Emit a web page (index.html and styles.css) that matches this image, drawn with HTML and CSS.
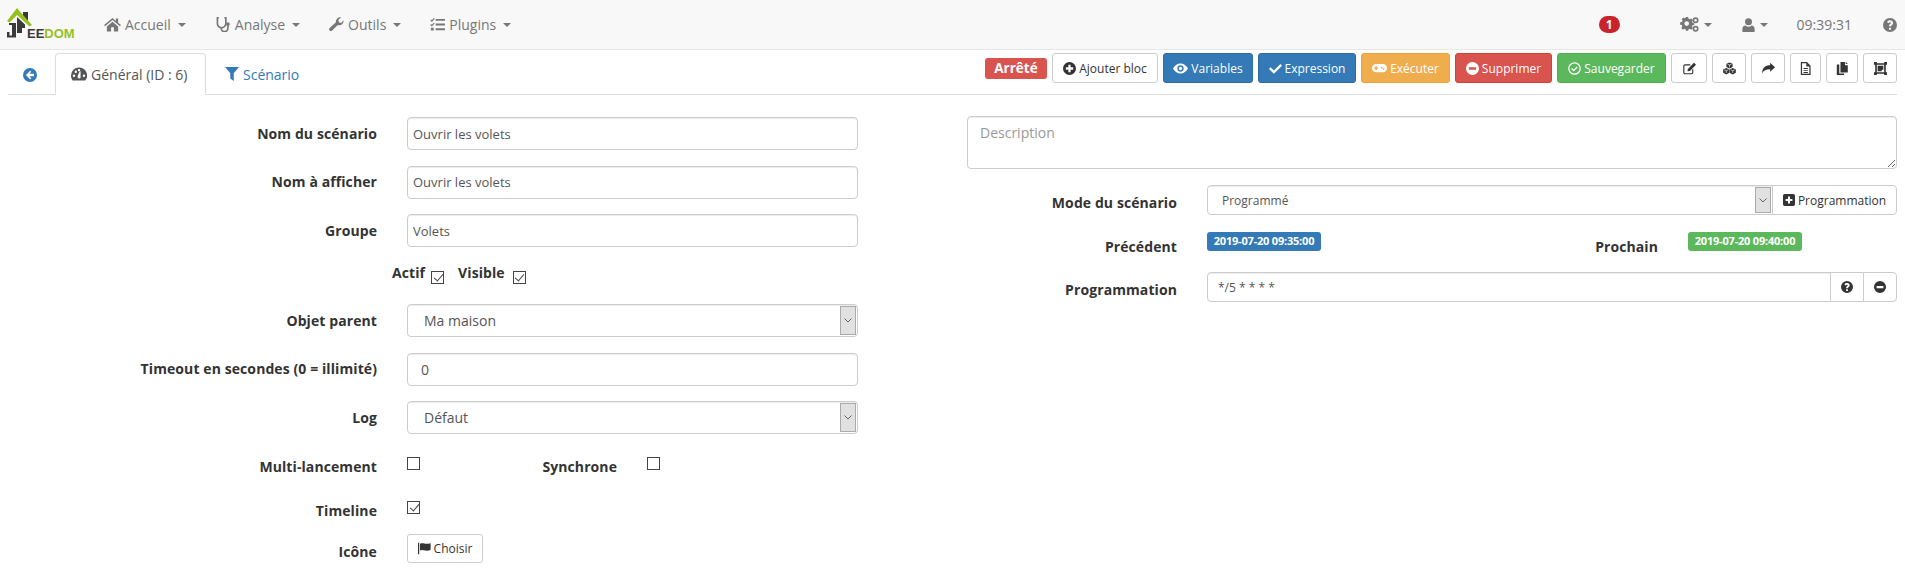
FILE: index.html
```html
<!DOCTYPE html>
<html lang="fr">
<head>
    <title>Jeedom - Scénario</title>
    <meta charset="UTF-8">
    <link rel="stylesheet" href="styles.css">
</head>
<body>
    <svg class="icon-defs" width="0" height="0">
        <symbol id="i-home" viewBox="0 0 18 16"><path d="M9 1 0 8.600l1 1.200L9 3.200l8 6.600 1-1.200-3-2.500V1.500h-2.400v2.700zM3 10v5.500h4.500V11h3v4.500H15V10L9 5z"/></symbol>
        <symbol id="i-steth" viewBox="0 0 16 16"><path d="M3 1H1.500v6a5 5 0 0 0 4 4.500v.5a3.600 3.600 0 0 0 7.200 0V9" fill="none" stroke="currentColor" stroke-width="1.800"/><path d="M9 1h1.500v6a5 5 0 0 1-5 4.500" fill="none" stroke="currentColor" stroke-width="1.800"/><circle cx="12.700" cy="7.500" r="2"/></symbol>
        <symbol id="i-wrench" viewBox="0 0 16 16"><path d="M15.500 4.200c0 2.500-2 4.500-4.500 4.500-.6 0-1.100-.1-1.600-.3l-6 6a1.900 1.900 0 0 1-2.700-2.700l6.700-6A4.500 4.500 0 0 1 13 .5L10 3l.5 2.500 2.500.8 2.400-2.900z"/></symbol>
        <symbol id="i-tasks" viewBox="0 0 16 16"><path d="M6 2h10v2H6zM6 7h10v2H6zM6 12h10v2H6zM1 11.500h3v3H1z"/><path d="m.7 3 1.300 1.300L4.500 1.500M.7 8l1.300 1.300L4.500 6.500" fill="none" stroke="currentColor" stroke-width="1.300"/></symbol>
        <symbol id="i-gauge" viewBox="0 1 16 14"><path d="M8 1.500a8 8 0 0 0-8 8c0 2 .7 3.600 1.700 5h12.600A8 8 0 0 0 8 1.500zM3 11a1.200 1.200 0 1 1 0-2.400A1.200 1.200 0 0 1 3 11zm1.800-4a1.200 1.200 0 1 1 0-2.400 1.200 1.200 0 0 1 0 2.400zM8 5.300a1.200 1.200 0 1 1 0-2.400 1.200 1.200 0 0 1 0 2.400zm1.500 6.700a1.800 1.800 0 0 1-3-1.500l2.200-5.300h.9zM13 11a1.200 1.200 0 1 1 0-2.400 1.200 1.200 0 0 1 0 2.400z"/></symbol>
        <symbol id="i-filter" viewBox="0 0 16 16"><path d="M0 0h16L10 7v9L6 13V7z"/></symbol>
        <symbol id="i-back" viewBox="0 0 16 16"><path fill-rule="evenodd" d="M8 0a8 8 0 1 0 0 16A8 8 0 0 0 8 0zm.3 3 1.200 1.200L7.300 6.500H12.500v3H7.300l2.200 2.300L8.300 13l-5-5z"/></symbol>
        <symbol id="i-plus-c" viewBox="0 0 16 16"><path fill-rule="evenodd" d="M8 0a8 8 0 1 0 0 16A8 8 0 0 0 8 0zm-1.400 3.500h2.800v3.100h3.100v2.800H9.400v3.100H6.600V9.400H3.500V6.600h3.100z"/></symbol>
        <symbol id="i-minus-c" viewBox="0 0 16 16"><path fill-rule="evenodd" d="M8 0a8 8 0 1 0 0 16A8 8 0 0 0 8 0zM3.500 6.500h9v3h-9z"/></symbol>
        <symbol id="i-eye" viewBox="0 0 18 12"><path fill-rule="evenodd" d="M9 0C5 0 2 2.500 0 6c2 3.500 5 6 9 6s7-2.500 9-6c-2-3.500-5-6-9-6zm0 2.200a3.800 3.800 0 1 1 0 7.600 3.800 3.800 0 0 1 0-7.600zM9 4a2 2 0 1 0 0 4 2 2 0 0 0 0-4z"/></symbol>
        <symbol id="i-check" viewBox="0 0 16 13"><path d="M2 5 0 7l6 6L16 3l-2-2-8 8z"/></symbol>
        <symbol id="i-game" viewBox="0 0 20 12"><path fill-rule="evenodd" d="M5.500 0h9a5.500 5.500 0 0 1 0 11h-9a5.500 5.500 0 0 1 0-11zM4.500 3v1.500H3v2h1.500V8h2V6.500H8v-2H6.500V3zM13 3.500a1.300 1.300 0 1 0 0 2.600 1.300 1.300 0 0 0 0-2.600zm2.500 2a1.300 1.300 0 1 0 0 2.600 1.300 1.300 0 0 0 0-2.600z"/></symbol>
        <symbol id="i-check-o" viewBox="0 0 16 16"><circle cx="8" cy="8" r="7" fill="none" stroke="currentColor" stroke-width="1.500"/><path d="m4.500 8 2.500 2.500 4.500-4.500" fill="none" stroke="currentColor" stroke-width="1.600"/></symbol>
        <symbol id="i-edit" viewBox="0 0 16 16"><path d="M12 9v4a1.500 1.500 0 0 1-1.500 1.500h-8A1.500 1.500 0 0 1 1 13V5a1.500 1.500 0 0 1 1.500-1.500H9" fill="none" stroke="currentColor" stroke-width="1.400"/><path d="M13.500.8 16 3.300 8.500 11l-3 .5.500-3z"/></symbol>
        <symbol id="i-cubes" viewBox="0 0 16 16"><path d="m8 .5 3.800 1.600v4.200L8 8 4.200 6.300V2.100zM4 7.500l3.800 1.600v4.200L4 15.500.2 13.300V9.100zM12 7.500l3.800 1.600v4.200L12 15.500l-3.800-2.200V9.100z"/><path d="M5.500 2.600 8 3.700l2.500-1.100M8 3.700v2.800M1.500 9.600 4 10.700l2.500-1.100M4 10.700v2.800M9.500 9.600l2.500 1.100 2.500-1.100M12 10.700v2.800" fill="none" stroke="#fff" stroke-width=".8"/></symbol>
        <symbol id="i-share" viewBox="0 0 16 14"><path d="M16 5.500 10 0v3C4 3 .5 6 0 13c1.800-3.500 5-5 10-5v3z"/></symbol>
        <symbol id="i-file" viewBox="0 0 14 16"><path d="M2 .8h6.500L12.500 5v10.200H2z" fill="none" stroke="currentColor" stroke-width="1.500"/><path d="M4.500 7.500h5.500v1.200H4.500zM4.500 10h5.500v1.200H4.500zM4.500 12.300h5.500v1.200H4.500zM8 1v4.500h4.500"/></symbol>
        <symbol id="i-copy" viewBox="0 0 16 16"><path d="M5.500 0H11v4h3.500v9h-9zM12 0l2.500 2.500H12zM1 3h3v11h6v2H1z"/></symbol>
        <symbol id="i-group" viewBox="0 0 16 16"><path fill-rule="evenodd" d="M0 0h3.500v1.500h9V0H16v3.500h-1.500v9H16V16h-3.500v-1.500h-9V16H0v-3.500h1.500v-9H0zm3.500 3.500v9h9v-9z"/><path d="M4.500 4.500h7v5h-2v2h-5z"/></symbol>
        <symbol id="i-flag" viewBox="0 0 16 14"><path d="M0 0h1.500v14H0zM2.500 1c4-1.500 6 1 10 0l3-.5v8c-3 2-6 1-9 .5-2-.3-3 0-4 .5z"/></symbol>
        <symbol id="i-question" viewBox="0 0 16 16"><path fill-rule="evenodd" d="M8 0a8 8 0 1 0 0 16A8 8 0 0 0 8 0zM6.800 11h2.400v2.300H6.800zM8 2.700c2 0 3.500 1.200 3.500 3 0 1.400-.8 2-1.500 2.500-.6.400-.8.700-.8 1.300H6.800c0-1.300.4-2 1.200-2.500.6-.4 1-.7 1-1.200s-.5-.9-1.100-.9-1.200.4-1.500 1L4.600 4.600C5.300 3.400 6.500 2.700 8 2.700z"/></symbol>
        <symbol id="i-gears" viewBox="0 0 20 16"><path fill-rule="evenodd" d="M6 2.500h2.500l.4 1.700 1.500.7 1.500-.9 1.700 1.800-.9 1.400.6 1.500 1.700.5V11l-1.700.4-.6 1.500.9 1.500-1.700 1.600-1.500-.9-1.500.6-.4 1.500H6v-1.500l-1.500-.6-1.500.9-1.700-1.800.9-1.300L2 11 0 10.700V8.200l2-.5.600-1.500-.9-1.400L3.400 3l1.500.9L6 3.200zM7 7a2.500 2.500 0 1 0 0 5 2.500 2.500 0 0 0 0-5z" transform="translate(0 -2.500)"/><circle cx="16.500" cy="3.500" r="2.300" fill="none" stroke="currentColor" stroke-width="1.800"/><circle cx="16.500" cy="12.500" r="2.300" fill="none" stroke="currentColor" stroke-width="1.800"/></symbol>
        <symbol id="i-user" viewBox="0 0 14 16"><circle cx="7" cy="4.200" r="4"/><path d="M0 16v-3.500C0 10 1.500 8.500 3.500 8.500c1 1 2.200 1.500 3.500 1.500s2.500-.5 3.500-1.500c2 0 3.500 1.500 3.500 4V16z"/></symbol>
        <symbol id="i-plus-s" viewBox="0 0 14 14"><path fill-rule="evenodd" d="M2 0h10a2 2 0 0 1 2 2v10a2 2 0 0 1-2 2H2a2 2 0 0 1-2-2V2a2 2 0 0 1 2-2zm3.800 3v2.800H3v2.400h2.800V11h2.400V8.200H11V5.800H8.200V3z"/></symbol>
        <symbol id="i-chevron" viewBox="0 0 8 5"><path d="m.5.500 3.500 3.500L7.500.500" fill="none" stroke="currentColor" stroke-width=".8"/></symbol>
    </svg>

    <nav class="navbar">
        <a class="logo" href="#">
            <svg width="70" height="32" viewBox="0 0 70 32">
                <path class="logo-dark" d="M16 4h5v9l-5-5zM10 9l8 7.500V20h-3v5h-5zM2 15h7v14.500H0V24h2.500v3.500H5V17H2z"/>
                <path class="logo-green" d="M10 0 0 13l2.500 1.500L10 7l12.500 11.500L25 17 12.500 3z"/>
                <text class="logo-text" x="20" y="30">EE<tspan class="logo-text-green">DOM</tspan></text>
            </svg>
        </a>
        <ul class="nav-menu">
            <li><svg class="ic ic-home"><use href="#i-home"/></svg>Accueil<span class="caret"></span></li>
            <li><svg class="ic"><use href="#i-steth"/></svg>Analyse<span class="caret"></span></li>
            <li><svg class="ic"><use href="#i-wrench"/></svg>Outils<span class="caret"></span></li>
            <li><svg class="ic"><use href="#i-tasks"/></svg>Plugins<span class="caret"></span></li>
        </ul>
        <div class="nav-right">
            <span class="notif">1</span>
            <span class="nav-gears"><svg class="ic ic-gears"><use href="#i-gears"/></svg><span class="caret"></span></span>
            <span class="nav-user"><svg class="ic ic-user"><use href="#i-user"/></svg><span class="caret"></span></span>
            <span class="clock">09:39:31</span>
            <svg class="ic ic-help"><use href="#i-question"/></svg>
        </div>
    </nav>

    <div class="page">
        <div class="tabbar">
            <a class="tab-back" href="#"><svg class="ic"><use href="#i-back"/></svg></a>
            <a class="tab active" href="#"><svg class="ic"><use href="#i-gauge"/></svg>Général (ID : 6)</a>
            <a class="tab tab-link" href="#"><svg class="ic"><use href="#i-filter"/></svg>Scénario</a>
            <div class="actions">
                <span class="state">Arrêté</span>
                <button class="btn btn-default btn-add"><svg class="ic"><use href="#i-plus-c"/></svg>Ajouter bloc</button>
                <button class="btn btn-primary btn-var"><svg class="ic ic-eye"><use href="#i-eye"/></svg>Variables</button>
                <button class="btn btn-primary btn-exp"><svg class="ic"><use href="#i-check"/></svg>Expression</button>
                <button class="btn btn-warning btn-run"><svg class="ic ic-game"><use href="#i-game"/></svg>Exécuter</button>
                <button class="btn btn-danger btn-del"><svg class="ic"><use href="#i-minus-c"/></svg>Supprimer</button>
                <button class="btn btn-success btn-save"><svg class="ic"><use href="#i-check-o"/></svg>Sauvegarder</button>
                <button class="btn btn-default btn-ic w36"><svg class="ic"><use href="#i-edit"/></svg></button>
                <button class="btn btn-default btn-ic w34"><svg class="ic"><use href="#i-cubes"/></svg></button>
                <button class="btn btn-default btn-ic w34"><svg class="ic"><use href="#i-share"/></svg></button>
                <button class="btn btn-default btn-ic w31"><svg class="ic"><use href="#i-file"/></svg></button>
                <button class="btn btn-default btn-ic w32"><svg class="ic"><use href="#i-copy"/></svg></button>
                <button class="btn btn-default btn-ic w34"><svg class="ic"><use href="#i-group"/></svg></button>
            </div>
        </div>

        <div class="columns">
            <form class="col-left">
                <div class="row">
                    <label class="lbl">Nom du scénario</label>
                    <input class="field" type="text" value="Ouvrir les volets">
                </div>
                <div class="row">
                    <label class="lbl">Nom à afficher</label>
                    <input class="field" type="text" value="Ouvrir les volets">
                </div>
                <div class="row">
                    <label class="lbl">Groupe</label>
                    <input class="field" type="text" value="Volets">
                </div>
                <div class="row-flags">
                    <label class="lbl">Actif</label><input class="chk" type="checkbox" checked>
                    <label class="lbl">Visible</label><input class="chk" type="checkbox" checked>
                </div>
                <div class="row">
                    <label class="lbl">Objet parent</label>
                    <div class="select"><span>Ma maison</span><span class="select-arrow"><svg><use href="#i-chevron"/></svg></span></div>
                </div>
                <div class="row">
                    <label class="lbl">Timeout en secondes (0 = illimité)</label>
                    <input class="field field-wide" type="text" value="0">
                </div>
                <div class="row">
                    <label class="lbl">Log</label>
                    <div class="select"><span>Défaut</span><span class="select-arrow"><svg><use href="#i-chevron"/></svg></span></div>
                </div>
                <div class="row-check row-multi">
                    <label class="lbl">Multi-lancement</label>
                    <input class="chk" type="checkbox">
                    <label class="lbl">Synchrone</label>
                    <input class="chk" type="checkbox">
                </div>
                <div class="row-check row-timeline">
                    <label class="lbl">Timeline</label>
                    <input class="chk" type="checkbox" checked>
                </div>
                <div class="row row-icon">
                    <label class="lbl">Icône</label>
                    <div><button type="button" class="btn btn-default btn-pick"><svg class="ic"><use href="#i-flag"/></svg>Choisir</button></div>
                </div>
            </form>

            <div class="col-right">
                <textarea class="desc" placeholder="Description"></textarea>
                <div class="rrow rrow-mode">
                    <label class="lbl lbl-low">Mode du scénario</label>
                    <div class="group">
                        <div class="select select-small"><span>Programmé</span><span class="select-arrow"><svg><use href="#i-chevron"/></svg></span></div>
                        <button class="btn btn-default btn-addon"><svg class="ic"><use href="#i-plus-s"/></svg>Programmation</button>
                    </div>
                </div>
                <div class="rrow-dates">
                    <label class="lbl">Précédent</label>
                    <div><span class="stamp stamp-blue">2019-07-20 09:35:00</span></div>
                    <label class="lbl">Prochain</label>
                    <div><span class="stamp stamp-green">2019-07-20 09:40:00</span></div>
                </div>
                <div class="rrow">
                    <label class="lbl lbl-low">Programmation</label>
                    <div class="group">
                        <input class="field field-cron" type="text" value="*/5 * * * *">
                        <span class="addon"><svg class="ic"><use href="#i-question"/></svg></span>
                        <span class="addon addon-last"><svg class="ic"><use href="#i-minus-c"/></svg></span>
                    </div>
                </div>
            </div>
        </div>
    </div>
</body>
</html>
```

FILE: styles.css
```css
* {
    box-sizing: border-box;
}
body {
    margin: 0;
    font-family: "Open Sans", sans-serif;
    font-size: 14px;
    color: #333;
    background: #fff;
    overflow: hidden;
}
.icon-defs {
    position: absolute;
}
.ic {
    width: 14px;
    height: 14px;
    fill: currentColor;
    flex: none;
}
a {
    text-decoration: none;
}

/* top bar */
.navbar {
    display: flex;
    align-items: center;
    height: 50px;
    background: #f8f8f8;
    border-bottom: 1px solid #e7e7e7;
    color: #777;
}
.logo {
    display: block;
    width: 76px;
    height: 32px;
    margin: 0 0 0 7px;
    align-self: flex-start;
    margin-top: 8px;
}
.logo-dark {
    fill: #3a3a3a;
}
.logo-green {
    fill: #94c11f;
}
.logo-text {
    font-family: "Liberation Sans", sans-serif;
    font-weight: 700;
    font-size: 13px;
    fill: #3a3a3a;
}
.logo-text-green {
    fill: #94c11f;
}
.nav-menu {
    display: flex;
    list-style: none;
    margin: 0;
    padding: 0 0 0 21px;
}
.nav-menu li {
    display: flex;
    align-items: center;
    margin-right: 29px;
    font-size: 14px;
}
.nav-menu li:first-child {
    margin-right: 30px;
}
.nav-menu .ic {
    margin-right: 4px;
    width: 15px;
    height: 15px;
}
.nav-menu .ic-home {
    width: 17px;
}
.caret {
    display: inline-block;
    width: 0;
    height: 0;
    margin-left: 7px;
    border-top: 4px solid;
    border-left: 4px solid transparent;
    border-right: 4px solid transparent;
}
.nav-right {
    display: flex;
    align-items: center;
    margin-left: auto;
    padding-right: 8px;
}
.notif {
    width: 21px;
    height: 17px;
    margin-right: 60px;
    border-radius: 10px;
    background: #c9242b;
    color: #fff;
    font-size: 12px;
    font-weight: 700;
    line-height: 17px;
    text-align: center;
}
.ic-gears {
    width: 19px;
    height: 15px;
}
.nav-gears, .nav-user {
    display: flex;
    align-items: center;
}
.nav-gears .caret, .nav-user .caret {
    margin-left: 5px;
}
.nav-gears {
    margin-right: 30px;
}
.nav-user {
    margin-right: 29px;
}
.ic-user {
    width: 13px;
    height: 14px;
}
.clock {
    font-size: 14px;
    margin-right: 31px;
}
.ic-help {
    width: 14px;
    height: 14px;
}

/* tabs and action buttons */
.page {
    padding: 3px 8px 0;
}
.tabbar {
    display: flex;
    align-items: flex-start;
    height: 42px;
    border-bottom: 1px solid #ddd;
}
.tab-back {
    width: 47px;
    padding: 15px 0 0 15px;
    color: #337ab7;
    line-height: 14px;
}
.tab {
    display: flex;
    align-items: center;
    height: 42px;
    padding: 0 15px;
    font-size: 14px;
    border: 1px solid transparent;
    border-radius: 4px 4px 0 0;
}
.tab .ic {
    width: 16px;
    margin-right: 4px;
}
.tab.active {
    width: 151px;
    color: #555;
    background: #fff;
    border-color: #ddd #ddd #fff;
}
.tab-link {
    color: #337ab7;
    padding-left: 18px;
}
.tab-link .ic {
    width: 14px;
}
.actions {
    display: flex;
    align-items: flex-start;
    gap: 5px;
    margin-left: auto;
}
.state {
    width: 62px;
    height: 21px;
    margin-top: 5px;
    border-radius: 3px;
    background: #d9534f;
    color: #fff;
    font-size: 13.500px;
    font-weight: 700;
    line-height: 20px;
    text-align: center;
}
.btn {
    display: inline-flex;
    align-items: center;
    justify-content: center;
    height: 30px;
    padding: 0;
    border: 1px solid transparent;
    border-radius: 3px;
    font-family: "Open Sans", sans-serif;
    font-size: 12px;
    color: #fff;
}
.btn .ic {
    width: 13px;
    height: 13px;
    margin-right: 3px;
}
.btn-default {
    background: #fff;
    border-color: #ccc;
    color: #333;
}
.btn-primary {
    background: #337ab7;
    border-color: #2e6da4;
}
.btn-warning {
    background: #f0ad4e;
    border-color: #eea236;
}
.btn-danger {
    background: #d9534f;
    border-color: #d43f3a;
}
.btn-success {
    background: #5cb85c;
    border-color: #4cae4c;
}
.btn-add {
    width: 106px;
}
.btn-var {
    width: 90px;
}
.btn-exp {
    width: 98px;
}
.btn-run {
    width: 89px;
}
.btn-del {
    width: 97px;
}
.btn-save {
    width: 109px;
}
.btn .ic-eye, .btn .ic-game {
    width: 15px;
}
.btn-ic .ic {
    margin: 0;
}
.w36 {
    width: 36px;
}
.w34 {
    width: 34px;
}
.w32 {
    width: 32px;
}
.w31 {
    width: 31px;
}

/* form columns */
.columns {
    display: grid;
    grid-template-columns: 929px 1fr;
    column-gap: 30px;
}
.col-left {
    padding-top: 22px;
}
.col-right {
    padding-top: 21px;
}
.lbl {
    font-size: 14px;
    font-weight: 700;
    letter-spacing: .09px;
    color: #333;
    line-height: 20px;
    text-align: right;
}
.row {
    display: grid;
    grid-template-columns: 369px 451px;
    column-gap: 30px;
    align-items: center;
    height: 33px;
    margin-bottom: 15.5px;
}
.field {
    display: block;
    width: 100%;
    height: 33px;
    padding: 0 5px;
    border: 1px solid #ccc;
    border-radius: 4px;
    box-shadow: inset 0 1px 1px rgba(0, 0, 0, .075);
    font-family: "Open Sans", sans-serif;
    font-size: 13px;
    color: #555;
    background: #fff;
}
.field-wide {
    padding-left: 13px;
    font-size: 14px;
}
.select {
    display: flex;
    align-items: center;
    justify-content: space-between;
    width: 100%;
    height: 33px;
    padding: 1px 1px 1px 16px;
    border: 1px solid #ccc;
    border-radius: 4px;
    box-shadow: inset 0 1px 1px rgba(0, 0, 0, .075);
    font-size: 14px;
    color: #555;
    background: #fff;
}
.select-arrow {
    display: flex;
    align-items: center;
    justify-content: center;
    width: 16px;
    height: 100%;
    background: #e1e1e1;
    border: 1px solid #aaa;
    color: #444;
}
.select-arrow svg {
    width: 8px;
    height: 5px;
}
.chk {
    appearance: none;
    position: relative;
    width: 13px;
    height: 13px;
    margin: 0;
    border: 1px solid #444;
    background: #fff;
}
.chk:checked::after {
    content: "";
    position: absolute;
    left: 3.5px;
    top: 0;
    width: 4px;
    height: 8px;
    border: solid #444;
    border-width: 0 1px 1px 0;
    transform: rotate(40deg);
}
.row-flags {
    display: flex;
    align-items: flex-start;
    height: 26px;
    margin-bottom: 15.5px;
    padding: 0 0 0 384px;
}
.row-flags .lbl {
    margin-right: 6px;
}
.row-flags .chk {
    margin-top: 8px;
    margin-right: 14px;
}
.row-flags .lbl + .chk + .lbl {
    margin-right: 8px;
}
.row-check {
    display: grid;
    grid-template-columns: 369px 100px 80px 13px;
    column-gap: 30px;
    align-items: start;
}
.row-multi {
    height: 44px;
}
.row-multi .lbl, .row-multi .chk {
    margin-top: 7.5px;
}
.row-multi {
    height: 51.5px;
}
.row-timeline {
    height: 33px;
}
.row-icon {
    height: 29px;
    margin: 0;
    align-items: start;
}
.row-icon .lbl {
    margin-top: 8px;
}
.btn-pick {
    width: 76px;
    height: 29px;
    border-radius: 3px;
}

/* right column */
.desc {
    display: block;
    width: 100%;
    height: 53px;
    margin-bottom: 16px;
    padding: 6px 12px;
    border: 1px solid #ccc;
    border-radius: 4px;
    box-shadow: inset 0 1px 1px rgba(0, 0, 0, .075);
    font-family: "Open Sans", sans-serif;
    font-size: 14px;
}
.desc::placeholder {
    color: #999;
}
.rrow {
    display: grid;
    grid-template-columns: 210px 1fr;
    column-gap: 30px;
    align-items: center;
}
.rrow-mode {
    margin-bottom: 17px;
}
.group {
    display: flex;
    height: 30px;
}
.select-small {
    flex: 1;
    height: 30px;
    padding-left: 14px;
    font-size: 12px;
    border-radius: 4px 0 0 4px;
}
.btn-addon {
    width: 125px;
    height: 30px;
    margin-left: -1px;
    border-radius: 0 4px 4px 0;
}
.btn-addon .ic {
    width: 12px;
    height: 12px;
}
.rrow-dates {
    display: grid;
    grid-template-columns: 210px 211px 210px 1fr;
    column-gap: 30px;
    height: 40px;
}
.rrow-dates .lbl {
    margin-top: 5px;
}
.lbl-low {
    margin-top: 5px;
}
.stamp {
    display: block;
    width: 114px;
    height: 19px;
    border-radius: 3px;
    color: #fff;
    font-size: 11px;
    font-weight: 700;
    letter-spacing: -.2px;
    line-height: 18px;
    text-align: center;
    white-space: nowrap;
}
.stamp-blue {
    background: #337ab7;
}
.stamp-green {
    background: #5cb85c;
}
.field-cron {
    flex: 1;
    width: auto;
    height: 30px;
    min-width: 0;
    padding-left: 10px;
    font-size: 12px;
    border-radius: 4px 0 0 4px;
}
.addon {
    display: flex;
    align-items: center;
    justify-content: center;
    width: 34px;
    margin-left: -1px;
    border: 1px solid #ccc;
    background: #fff;
}
.addon .ic {
    width: 12px;
    height: 12px;
}
.addon-last {
    border-radius: 0 4px 4px 0;
}
```
